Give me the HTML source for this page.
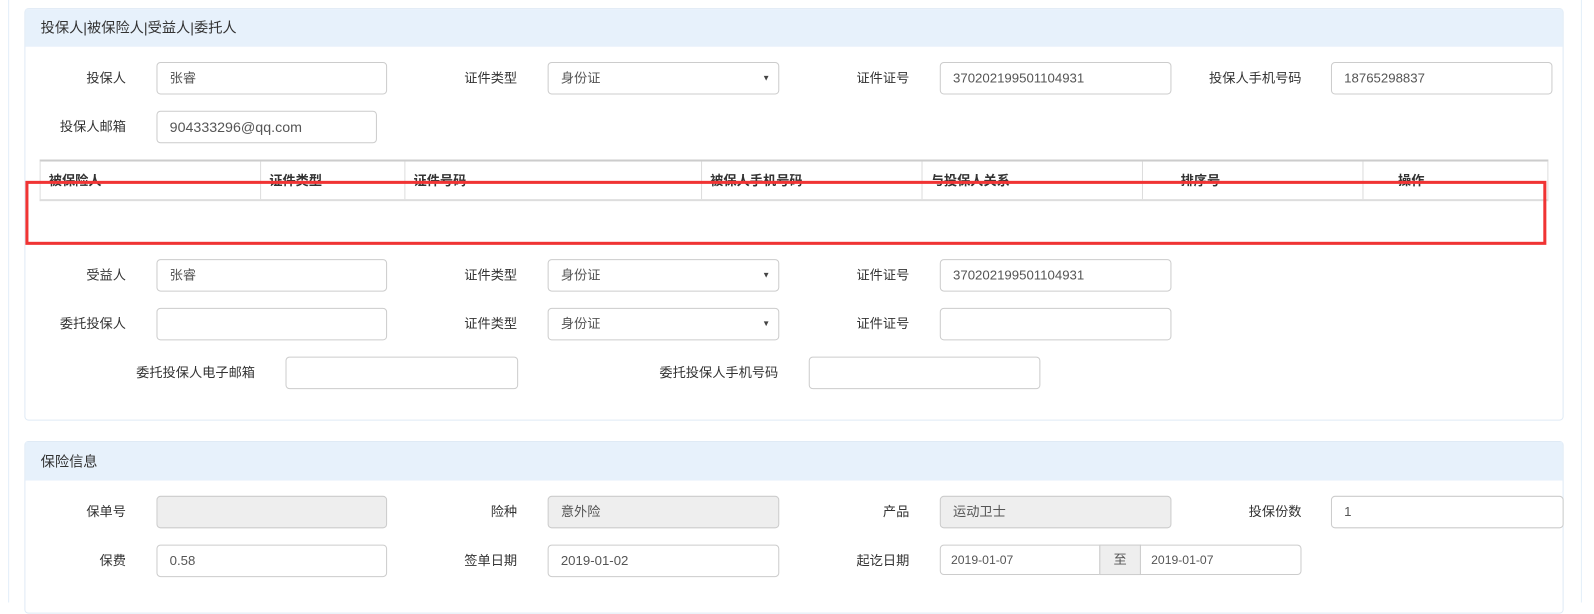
<!DOCTYPE html><html><head><meta charset="utf-8"><style>
*{box-sizing:border-box}
body{margin:0;width:1594px;height:593px;background:#fff;font-family:"Liberation Sans","Noto Sans CJK SC",sans-serif;font-size:13px;color:#333;position:relative;overflow:hidden}
#w{position:absolute;left:0;top:0;width:1594px;height:593px;transform:scale(1.016);transform-origin:0 0}
.a{position:absolute}
.vl{position:absolute;top:0;bottom:0;width:1px;background:#e3eef9}
.panel{position:absolute;left:24px;width:1515px;border:1px solid #dfeaf5;border-radius:4px;background:#fff}
.ph{position:absolute;left:0;right:0;top:0;background:#e7f1fb;font-size:14px;padding-left:15px;color:#333}
.lb{position:absolute;text-align:right;width:200px;line-height:32px;height:32px}
.in{position:absolute;height:32px;border:1px solid #ccc;border-radius:4px;background:#fff;line-height:30px;padding-left:12px;color:#555;font-size:13px}
.dis{background:#eee}
.sel::after{content:"▼";position:absolute;right:8px;top:0;font-size:8px;color:#444}
</style></head><body><div id="w">
<div class="vl" style="left:8px"></div>
<div class="vl" style="left:1556px"></div>
<div class="panel" style="top:8px;height:406px">
<div class="ph" style="height:37px;line-height:37px">投保人|被保险人|受益人|委托人</div></div>

<div class="lb" style="left:-76px;top:61px">投保人</div><div class="in" style="left:154px;top:61px;width:227px">张睿</div>
<div class="lb" style="left:309px;top:61px">证件类型</div><div class="in sel" style="left:539px;top:61px;width:228px">身份证</div>
<div class="lb" style="left:695px;top:61px">证件证号</div><div class="in" style="left:925px;top:61px;width:228px">370202199501104931</div>
<div class="lb" style="left:1081px;top:61px">投保人手机号码</div><div class="in" style="left:1310px;top:61px;width:218px">18765298837</div>
<div class="lb" style="left:-76px;top:109px">投保人邮箱</div><div class="in" style="left:154px;top:109px;width:217px;font-size:14px">904333296@qq.com</div>

<div class="a" style="left:39px;top:157px;width:1485px;height:41px;border-top:2px solid #ccc;border-bottom:2px solid #ddd;border-left:1px solid #ddd;border-right:1px solid #ddd"></div>
<div class="a" style="left:256px;top:159px;width:1px;height:37px;background:#ddd"></div>
<div class="a" style="left:398px;top:159px;width:1px;height:37px;background:#ddd"></div>
<div class="a" style="left:690px;top:159px;width:1px;height:37px;background:#ddd"></div>
<div class="a" style="left:907px;top:159px;width:1px;height:37px;background:#ddd"></div>
<div class="a" style="left:1124px;top:159px;width:1px;height:37px;background:#ddd"></div>
<div class="a" style="left:1341px;top:159px;width:1px;height:37px;background:#ddd"></div>
<div class="a" style="top:167px;font-weight:bold;left:48px">被保险人</div>
<div class="a" style="top:167px;font-weight:bold;left:265px">证件类型</div>
<div class="a" style="top:167px;font-weight:bold;left:407px">证件号码</div>
<div class="a" style="top:167px;font-weight:bold;left:699px">被保人手机号码</div>
<div class="a" style="top:167px;font-weight:bold;left:916px">与投保人关系</div>
<div class="a" style="top:167px;font-weight:bold;left:1162px">排序号</div>
<div class="a" style="top:167px;font-weight:bold;left:1376px">操作</div>
<div class="a" style="left:25px;top:178px;width:1497px;height:63px;border:3px solid #f03434"></div>

<div class="lb" style="left:-76px;top:255px">受益人</div><div class="in" style="left:154px;top:255px;width:227px">张睿</div>
<div class="lb" style="left:309px;top:255px">证件类型</div><div class="in sel" style="left:539px;top:255px;width:228px">身份证</div>
<div class="lb" style="left:695px;top:255px">证件证号</div><div class="in" style="left:925px;top:255px;width:228px">370202199501104931</div>
<div class="lb" style="left:-76px;top:303px">委托投保人</div><div class="in" style="left:154px;top:303px;width:227px"></div>
<div class="lb" style="left:309px;top:303px">证件类型</div><div class="in sel" style="left:539px;top:303px;width:228px">身份证</div>
<div class="lb" style="left:695px;top:303px">证件证号</div><div class="in" style="left:925px;top:303px;width:228px"></div>
<div class="lb" style="left:51px;top:351px">委托投保人电子邮箱</div><div class="in" style="left:281px;top:351px;width:229px"></div>
<div class="lb" style="left:566px;top:351px">委托投保人手机号码</div><div class="in" style="left:796px;top:351px;width:228px"></div>

<div class="panel" style="top:434px;height:170px">
<div class="ph" style="height:38px;line-height:38px">保险信息</div></div>
<div class="lb" style="left:-76px;top:488px">保单号</div><div class="in dis" style="left:154px;top:488px;width:227px"></div>
<div class="lb" style="left:309px;top:488px">险种</div><div class="in dis" style="left:539px;top:488px;width:228px">意外险</div>
<div class="lb" style="left:695px;top:488px">产品</div><div class="in dis" style="left:925px;top:488px;width:228px">运动卫士</div>
<div class="lb" style="left:1081px;top:488px">投保份数</div><div class="in" style="left:1310px;top:488px;width:229px">1</div>
<div class="lb" style="left:-76px;top:536px">保费</div><div class="in" style="left:154px;top:536px;width:227px">0.58</div>
<div class="lb" style="left:309px;top:536px">签单日期</div><div class="in" style="left:539px;top:536px;width:228px">2019-01-02</div>
<div class="lb" style="left:695px;top:536px">起讫日期</div>
<div class="in" style="left:925px;top:536px;width:158px;height:30px;line-height:28px;border-radius:4px 0 0 4px;padding-left:10px;font-size:12px">2019-01-07</div>
<div class="in" style="left:1082px;top:536px;width:41px;height:30px;line-height:28px;border-radius:0;background:#eee;padding:0;text-align:center">至</div>
<div class="in" style="left:1122px;top:536px;width:159px;height:30px;line-height:28px;border-radius:0 4px 4px 0;padding-left:10px;font-size:12px">2019-01-07</div>
</div></body></html>
